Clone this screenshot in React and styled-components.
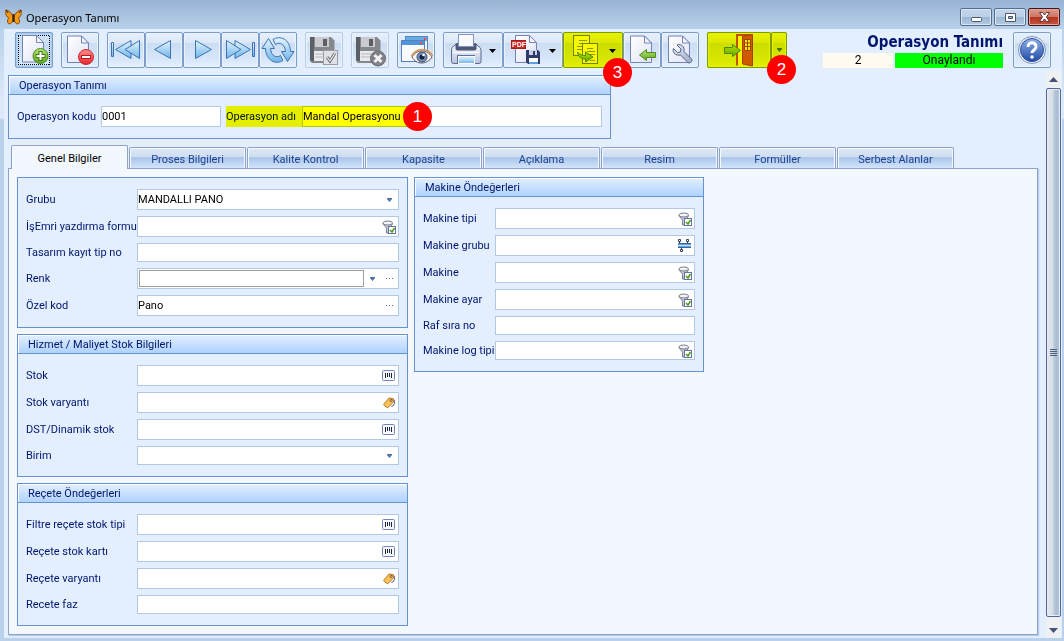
import React, { useState } from 'react';
import styled, { createGlobalStyle, css } from 'styled-components';

const GlobalStyle = createGlobalStyle`
  * {
    box-sizing: border-box;
  }
  body {
    margin: 0;
    background: #b9d1ea;
    font-family: Roboto, 'Noto Sans', sans-serif;
    font-size: 11px;
    color: #00156e;
  }
  button, input, select {
    font: inherit;
  }
`;

const Window = styled.div`
  display: flex;
  flex-direction: column;
  min-height: 100vh;
  padding: 0 2px 3px 4px;
  background: linear-gradient(#98b4d4 0, #b9d1ea 29px, #dce9f7 100px, #dce9f7 118px, #b9d1ea 120px);
`;

const TitleBar = styled.header`
  display: flex;
  align-items: center;
  gap: 4px;
  height: 29px;
  padding: 5px 2px 0 1px;
  color: #000;
`;

const WindowTitle = styled.h1`
  flex: 1;
  margin: 0;
  font-family: 'Noto Sans', 'Open Sans', sans-serif;
  font-size: 11px;
  font-weight: normal;
`;

const WindowButtons = styled.div`
  display: flex;
  gap: 2px;
`;

const WindowButton = styled.button`
  display: flex;
  align-items: center;
  justify-content: center;
  width: 32px;
  height: 18px;
  padding: 0;
  border: 1px solid ${(p) => (p.$danger ? '#43141a' : '#566f8e')};
  border-radius: 2px;
  box-shadow: inset 0 0 0 1px ${(p) => (p.$danger ? '#e0a598' : '#d8e5f3')};
  background: ${(p) =>
    p.$danger
      ? 'linear-gradient(#dc9c90 0, #cf7462 50%, #b23320 50%, #c4553c 100%)'
      : 'linear-gradient(#c3d6ea 0, #bad0e7 50%, #9ab6d3 50%, #b4cce5 100%)'};
`;

const Client = styled.div`
  display: flex;
  flex: 1;
  flex-direction: column;
  background: #e3eeff;
`;

const Toolbar = styled.div`
  display: flex;
  gap: 8px;
  padding: 3px 11px;
`;

const ToolGroup = styled.div`
  position: relative;
  display: flex;
  flex: none;
`;

const ToolButton = styled.button`
  display: flex;
  align-items: center;
  justify-content: center;
  flex: none;
  width: ${(p) => p.$width || 38}px;
  height: 36px;
  padding: 0;
  border: 1px solid #7c9cc9;
  border-radius: 2px;
  box-shadow: inset 0 0 0 1px #e9f2fd;
  background: linear-gradient(#e6f0fc 0, #dce8f8 28%, #cbddf3 29%, #d8e7fa 80%, #e6f1ff 100%);

  svg {
    flex: none;
  }

  &:disabled {
    border-color: #b9cbe3;
  }

  ${(p) =>
    p.$active &&
    css`
      box-shadow: inset 0 0 0 1px #a9cdf0, inset 0 0 0 2px #b8d6f2;
      background: linear-gradient(#d3e6f8, #c3dbf4 40%, #dbeafa);
    `}
`;

// translucent marker pen over the control it belongs to
const Highlight = styled.span`
  position: absolute;
  top: 0;
  left: 0;
  width: ${(p) => p.$width};
  height: 100%;
  background: #ffff00;
  mix-blend-mode: multiply;
  pointer-events: none;
`;

const Badge = styled.span`
  position: absolute;
  top: ${(p) => p.$top}px;
  left: ${(p) => p.$left}px;
  z-index: 2;
  display: flex;
  align-items: center;
  justify-content: center;
  width: 29px;
  height: 29px;
  border-radius: 50%;
  background: #ff0000;
  color: #fff;
  font-family: 'Liberation Sans', Arial, sans-serif;
  font-size: 17px;
  pointer-events: none;
`;

const Status = styled.div`
  display: flex;
  flex-direction: column;
  justify-content: space-between;
  width: 180px;
  margin: 0 2px 0 auto;
`;

const StatusTitle = styled.h2`
  margin: 0;
  font-family: 'DejaVu Sans Condensed', 'DejaVu Sans', sans-serif;
  font-stretch: condensed;
  font-size: 15px;
  line-height: 21px;
  text-align: right;
  white-space: nowrap;
`;

const StatusCells = styled.div`
  display: flex;
  gap: 2px;
`;

const StatusCell = styled.span`
  flex: ${(p) => (p.$wide ? '1' : '0 0 70px')};
  background: ${(p) => (p.$wide ? '#00ff00' : '#fffbf0')};
  color: #000;
  font-size: 12px;
  line-height: 15px;
  text-align: center;
`;

const Body = styled.div`
  display: flex;
  flex: 1;
`;

const Main = styled.main`
  display: flex;
  flex: 1;
  flex-direction: column;
  min-width: 0;
  padding: 4px 8px 3px 4px;
`;

const Group = styled.section`
  align-self: flex-start;
  width: ${(p) => p.$width}px;
  border: 1px solid #6593cf;
  background: #e3eeff;
`;

const GroupTitle = styled.h3`
  height: 19px;
  margin: 0;
  padding-left: 10px;
  border-bottom: 1px solid #6593cf;
  box-shadow: inset 1px 1px 0 #fff;
  background: linear-gradient(#e3efff, #afd2ff);
  font-size: 11px;
  font-weight: normal;
  line-height: 19px;
`;

const Fields = styled.div`
  display: flex;
  flex-direction: column;
  gap: 6px;
  padding: 11px 8px;
`;

const InlineFields = styled.div`
  display: flex;
  gap: 5px;
  padding: 11px 8px;
`;

const Field = styled.div`
  position: relative;
  display: flex;
  align-items: center;
`;

const Label = styled.label`
  flex: none;
  width: ${(p) => p.$width}px;
  line-height: 16px;
  white-space: nowrap;
`;

const Box = styled.div`
  display: flex;
  align-items: center;
  flex: ${(p) => (p.$width ? 'none' : '1')};
  width: ${(p) => (p.$width ? `${p.$width}px` : 'auto')};
  min-width: 0;
  height: ${(p) => (p.$short ? 19 : 21)}px;
  padding-right: 1px;
  border: 1px solid #b3c8e4;
  background: #fff;
`;

const controlStyle = css`
  flex: 1;
  min-width: 0;
  height: 100%;
  padding: 0;
  border: 0;
  outline: none;
  background: transparent;
  color: #000;
`;

const Input = styled.input`
  ${controlStyle}
`;

const Select = styled.select`
  ${controlStyle}
  appearance: none;
`;

const ColorInput = styled.input`
  ${controlStyle}
  height: 17px;
  margin-left: 1px;
  border: 1px solid #a0a0a0;
`;

const BoxButton = styled.button`
  display: flex;
  align-items: center;
  justify-content: center;
  flex: none;
  width: 16px;
  height: 16px;
  padding: 0;
  border: 0;
  background: none;

  & + & {
    margin-left: 1px;
  }
`;

const Tabs = styled.div`
  display: flex;
  align-items: flex-end;
  gap: 1px;
  height: 29px;
  padding-left: 3px;
`;

const Tab = styled.button`
  flex: none;
  width: 117px;
  height: 21px;
  padding: 2px 0 0;
  border: 1px solid #8da3c9;
  border-bottom: 0;
  border-radius: 2px 2px 0 0;
  box-shadow: inset 1px 1px 0 #f5f9ff, inset -1px 0 0 #f5f9ff;
  background: linear-gradient(#dce7f5 0, #cfdef2 45%, #a9c5ea 48%, #d3e4fb 100%);
  color: #1e418f;

  ${(p) =>
    p.$active &&
    css`
      position: relative;
      height: 24px;
      margin-bottom: -1px;
      background: #f3f8ff;
      color: #000;
    `}
`;

const TabPanel = styled.div`
  display: flex;
  flex: 1;
  align-items: flex-start;
  gap: 6px;
  padding: 8px;
  border: 1px solid #8da3c9;
  box-shadow: 1px 1px 1px #b5cbea;
  background: #f3f8ff;
`;

const Column = styled.div`
  display: flex;
  flex-direction: column;
  gap: 6px;
`;

const Scroll = styled.div`
  display: flex;
  flex-direction: column;
  flex: none;
  width: 15px;
  margin-right: 1px;
`;

const ScrollArrow = styled.button`
  display: flex;
  align-items: center;
  justify-content: center;
  height: ${(p) => (p.$down ? 21 : 17)}px;
  padding: ${(p) => (p.$down ? '6px 0 0' : '0')};
  border: 0;
  background: #eff0f2;
`;

const ScrollThumb = styled.div`
  display: flex;
  align-items: center;
  justify-content: center;
  flex: 1;
  border: 1px solid #54659a;
  border-radius: 2px;
  box-shadow: inset 0 0 0 1px #e4eefb;
  background: linear-gradient(90deg, #e4e9ef 0, #d3dbe4 48%, #b9c8da 52%, #a9bad2 85%, #dde7f4 100%);
`;

const GradientDefs = styled.svg`
  position: absolute;
`;

const Gradients = () => (
  <GradientDefs width="0" height="0" aria-hidden="true">
    <defs>
      <linearGradient id="page" x1="0" y1="0" x2="1" y2="1">
        <stop offset="0" stopColor="#fff" />
        <stop offset="1" stopColor="#dfe4f4" />
      </linearGradient>
      <linearGradient id="sky" x1="0" y1="0" x2="0" y2="1">
        <stop offset="0" stopColor="#e4f5ff" />
        <stop offset="1" stopColor="#6fb4e8" />
      </linearGradient>
      <linearGradient id="green" x1="0" y1="0" x2="0" y2="1">
        <stop offset="0" stopColor="#b7e277" />
        <stop offset="1" stopColor="#5fa51e" />
      </linearGradient>
      <linearGradient id="red" x1="0" y1="0" x2="0" y2="1">
        <stop offset="0" stopColor="#ff8d8d" />
        <stop offset="1" stopColor="#e5252d" />
      </linearGradient>
      <linearGradient id="body" x1="0" y1="0" x2="0" y2="1">
        <stop offset="0" stopColor="#fbfcff" />
        <stop offset="1" stopColor="#b7c3df" />
      </linearGradient>
      <linearGradient id="help" x1="0" y1="0" x2="0" y2="1">
        <stop offset="0" stopColor="#8fb1e6" />
        <stop offset="1" stopColor="#1f4ba6" />
      </linearGradient>
      <linearGradient id="steel" x1="0" y1="0" x2="1" y2="1">
        <stop offset="0" stopColor="#e9eef6" />
        <stop offset="1" stopColor="#9aa9c4" />
      </linearGradient>
    </defs>
  </GradientDefs>
);

const Svg = ({ w = 36, h = 34, children }) => (
  <svg width={w} height={h} viewBox={`0 0 ${w} ${h}`} aria-hidden="true">
    {children}
  </svg>
);

const Page = ({ x = 6.5, y = 3, w = 21, h = 26.5, f = 7 }) => (
  <g stroke="#7482b6" strokeLinejoin="round">
    <path d={`M${x} ${y}h${w - f}l${f} ${f}v${h - f}h-${w}z`} fill="url(#page)" />
    <path d={`M${x + w - f} ${y}v${f}h${f}z`} fill="#f3f6ff" />
  </g>
);

const Caret = ({ x = 48.5, y = 16 }) => <path d={`M${x - 3.5} ${y}h7l-3.5 4z`} fill="#000" />;

const NewIcon = () => (
  <Svg>
    <path
      d="M2 2.5h32M2 31.5h32M2.5 3v29M33.5 3v29"
      fill="none"
      stroke="#000"
      strokeDasharray="1 1"
      shapeRendering="crispEdges"
    />
    <Page y={2.5} />
    <circle cx="24.5" cy="23" r="7.5" fill="url(#green)" stroke="#4b8a1c" />
    <path d="M24.5 18v10M19.5 23h10" stroke="#3f7d17" strokeWidth="4" />
    <path d="M24.5 19v8M20.5 23h8" stroke="#fff" strokeWidth="2" />
  </Svg>
);

const DeleteIcon = () => (
  <Svg>
    <Page x={5.5} />
    <circle cx="24" cy="24" r="7.5" fill="url(#red)" stroke="#d1262e" />
    <path d="M19 24h10" stroke="#b81a22" strokeWidth="4" />
    <path d="M20 24h8" stroke="#fff" strokeWidth="2" />
  </Svg>
);

const nav = { fill: 'url(#sky)', stroke: '#3c72b4', strokeLinejoin: 'round' };

const FirstIcon = () => (
  <Svg>
    <g {...nav}>
      <path d="M3.5 9.5h2v14h-2z" />
      <path d="M23 7.5v18l-15.5-9z" />
      <path d="M31.5 7.5v18L17 16.500z" />
    </g>
  </Svg>
);

const PrevIcon = () => (
  <Svg>
    <path d="M24.5 7.5v18l-16-9z" {...nav} />
  </Svg>
);

const NextIcon = () => (
  <Svg>
    <path d="M11.5 7.5v18l16-9z" {...nav} />
  </Svg>
);

const LastIcon = () => (
  <Svg>
    <g {...nav}>
      <path d="M30.5 9.5h2v14h-2z" />
      <path d="M13 7.5v18l15.5-9z" />
      <path d="M4.5 7.5v18l14.5-9z" />
    </g>
  </Svg>
);

const RefreshIcon = () => (
  <Svg>
    <g {...nav}>
      <path d="M13 6.5C20 2 30 6 30.5 18.500h3.500l-6.500 10-6-10h4C25 11 19.500 8.500 15.500 11.500z" />
      <path d="M23 27.500C16 32 6 28 5.500 15.500H2l6.500-10 6 10h-4C11 23 16.500 25.500 20.500 22.500z" />
    </g>
  </Svg>
);

const Floppy = ({ dark = '#5d5f66', mid = '#85878d' }) => (
  <g>
    <path d="M4 4h21l3.500 3.500V30H6l-2-2z" fill={mid} />
    <path d="M4 4h4v24H6l-2-1z" fill={dark} />
    <rect x="9" y="4" width="14" height="10" fill="#c9cbd0" />
    <rect x="17" y="6" width="4" height="7" fill={dark} />
    <rect x="8" y="18" width="17" height="10" fill="#e9eaec" />
    <path d="M9 21h15M9 24h15" stroke="#b5b7bc" />
  </g>
);

const SaveIcon = () => (
  <Svg>
    <Floppy />
    <rect x="17.5" y="17.5" width="14" height="14" fill="#e1e2e5" stroke="#9b9da3" />
    <path d="M21 24l3 4 5-8" fill="none" stroke="#777a80" strokeWidth="3" />
    <path d="M21 24l3 4 5-8" fill="none" stroke="#fff" />
  </Svg>
);

const SaveCancelIcon = () => (
  <Svg>
    <Floppy />
    <circle cx="26" cy="25.5" r="7.5" fill="#808288" stroke="#696b70" />
    <path d="M22.5 22l7 7M29.5 22l-7 7" stroke="#f4f4f5" strokeWidth="3" />
  </Svg>
);

const PreviewIcon = () => (
  <Svg>
    <rect x="7.5" y="3.5" width="22" height="20" fill="#f0f6ff" stroke="#5687c2" />
    <path d="M8 4h21v4H8z" fill="#69a9e4" />
    <rect x="26" y="5" width="2" height="2" fill="#ef4a3a" />
    <rect x="3.5" y="7.5" width="23" height="21" fill="#f7faff" stroke="#5680bd" />
    <path d="M4 8h22v4H4z" fill="#4f94d8" />
    <rect x="22" y="9" width="2" height="2" fill="#ef4a3a" />
    <path d="M14 24c5-8 15-8 20 0-5 8-16 8-20 0z" fill="#f5f3f1" stroke="#5b5663" />
    <path d="M13.500 23.500c4.500-9 16.500-9 21-.5" fill="none" stroke="#d39a66" strokeWidth="2" />
    <circle cx="24" cy="24" r="5" fill="#7590b8" stroke="#3d4f78" />
    <circle cx="24" cy="24" r="2.5" fill="#17203b" />
    <circle cx="25.5" cy="22" r="1.3" fill="#fff" />
  </Svg>
);

const PrintIcon = () => (
  <Svg w={58}>
    <path d="M8 14.5l5-4h18l5 4 1 2v12q0 2-2 2H9.500q-2 0-2-2v-12z" fill="url(#body)" stroke="#5d6b93" />
    <path d="M11.500 10.500h21v5q0 2-2 2h-17q-2 0-2-2z" fill="#4c5976" />
    <rect x="14.5" y="1.5" width="15" height="12" fill="#f7f9ff" stroke="#8592bb" />
    <path d="M9 19.5h26" stroke="#fff" />
    <path d="M13 22h18v9H13z" fill="#5f6f97" />
    <rect x="14.5" y="23.5" width="16" height="7" fill="url(#sky)" stroke="#f7f9ff" />
    <Caret />
  </Svg>
);

const PdfIcon = () => (
  <Svg w={58}>
    <Page x={11.5} y={2.5} w={21} h={27} />
    <rect x="7.5" y="7.5" width="14" height="8" fill="#cf2727" stroke="#a81c1c" />
    <text x="8" y="14" fill="#fff" fontFamily="Liberation Sans, sans-serif" fontSize="7" fontWeight="bold">
      PDF
    </text>
    <path d="M22 17h12l2 2v12H24l-2-2z" fill="#323c66" />
    <rect x="25" y="17" width="8" height="5" fill="#c9d2e8" />
    <rect x="29" y="18" width="2" height="4" fill="#323c66" />
    <rect x="25" y="25" width="9" height="6" fill="#fff" />
    <path d="M25 29h9v2h-9z" fill="#5aa3e0" />
    <Caret />
  </Svg>
);

const CopyIcon = () => (
  <Svg w={58}>
    <rect x="9.5" y="2.5" width="16" height="20" fill="#f6f8ff" stroke="#7482a6" />
    <path d="M15 7.5h8M15 10.5h8M13 13.5h10M13 16.5h10" stroke="#8f9ab5" />
    <rect x="18.5" y="10.5" width="15" height="20" fill="#f6f8ff" stroke="#7482a6" />
    <path d="M23 15.5h6M23 18.5h8M22 21.5h9M26 27.5h5" stroke="#8f9ab5" />
    <path
      d="M13.500 19c2 3 5 3.500 8 3.500V19l7.500 5-7.500 5v-3c-5 0-7.500-3-8-7z"
      fill="url(#green)"
      stroke="#4b8a1c"
    />
    <Caret />
  </Svg>
);

const ImportIcon = () => (
  <Svg>
    <Page />
    <path d="M15.5 22l7-5.500v3h9v5h-9v3z" fill="url(#green)" stroke="#4b8a1c" />
  </Svg>
);

const SettingsIcon = () => (
  <Svg>
    <Page />
    <path
      d="M11.500 15.500l4 4 3-.5.500-3-4-4c4-1.500 8 1.500 7 6.500l7.500 7.500c1.500 2-1.500 5-3.500 3.500L18.500 22c-5 1-8.500-2.500-7-6.500z"
      fill="url(#steel)"
      stroke="#53648b"
    />
  </Svg>
);

const ExitIcon = () => (
  <Svg w={62}>
    <path d="M29 32.5V2h14v30" fill="#f2f4fb" stroke="#c25223" strokeWidth="2" />
    <path d="M34.500 3.500l10-2V33l-10-2z" fill="#cf5a2a" stroke="#a6401a" />
    <path d="M36.500 6.500h6v11h-6z" fill="#e9edf8" stroke="#a6401a" />
    <path d="M39.500 6v11M36.500 10h6M36.500 13.500h6" stroke="#a6401a" />
    <path d="M16.500 14.500h8v-3l8 6-8 6v-3h-8z" fill="url(#green)" stroke="#4b8a1c" />
  </Svg>
);

const HelpIcon = () => (
  <Svg>
    <circle cx="18" cy="17" r="13.5" fill="#f4f7fd" stroke="#7e8fb8" />
    <circle cx="18" cy="17" r="11.5" fill="url(#help)" stroke="#2b4f9c" />
    <path d="M14 14c0-6 8.500-5.500 8 0 0 3-4 3-4 6" fill="none" stroke="#fff" strokeWidth="3" />
    <circle cx="18" cy="24" r="1.8" fill="#fff" />
  </Svg>
);

const ButterflyIcon = () => (
  <Svg w={17} h={16}>
    <path d="M8 8C7 4 3 1 1 1c-1 3 0 7 3 8-2 1-2 5 0 6 2 0 4-2 4-5z" fill="#f39a14" stroke="#8a4a0c" />
    <path d="M9 8c1-4 5-7 7-7 1 3 0 7-3 8 2 1 2 5 0 6-2 0-4-2-4-5z" fill="#f39a14" stroke="#8a4a0c" />
    <path d="M8.5 5v8" stroke="#3c2108" strokeWidth="2" />
    <path d="M1 1l2 3M16 1l-2 3" stroke="#3c2108" />
  </Svg>
);

const DropIcon = () => (
  <Svg w={7} h={4}>
    <path d="M1 0h5v1H1zM1 1h5L3.500 4z" fill="#4a72ad" />
  </Svg>
);

const DotsIcon = () => (
  <Svg w={8} h={2}>
    <path d="M1 0h1v1H1zM4 0h1v1H4zM7 0h1v1H7z" fill="#4a6ea8" />
  </Svg>
);

const FilterIcon = () => (
  <Svg w={14} h={14}>
    <path d="M1 3.500c0 2 3.500 3 3.500 5V13h3V8.500c0-2 3-3 3-5z" fill="#c3c8d2" stroke="#777e8e" />
    <ellipse cx="5.700" cy="3" rx="4.800" ry="2" fill="#f2f3f6" stroke="#777e8e" />
    <rect x="6.5" y="6.5" width="7" height="7" fill="#fff" stroke="#6572a6" />
    <path d="M8 10l2 2 2.500-4" fill="none" stroke="#4b9a16" strokeWidth="1.5" />
  </Svg>
);

const BarcodeIcon = () => (
  <Svg w={14} h={12}>
    <rect x=".5" y=".5" width="12" height="10" rx="1" fill="#f5f8ff" stroke="#7484b8" />
    <path d="M3.500 3v5M5.500 3v4M7.500 3v4M9.500 3v5" stroke="#1c2440" />
  </Svg>
);

const TagIcon = () => (
  <Svg w={12} h={12}>
    <path d="M8 2.500c3-2 5 2 2.500 6l-2 1" fill="none" stroke="#555b6b" />
    <path d="M.500 7.500L6 1l4 .500.500 3.500-6 6z" fill="#fcc35a" stroke="#b77328" />
    <circle cx="8" cy="3.500" r="1" fill="#fff" stroke="#7a4b18" />
  </Svg>
);

const MachineIcon = () => (
  <Svg w={14} h={14}>
    <path d="M1.500 3v3M9.500 3v3M3.500 9v3" stroke="#3a3f50" />
    <path d="M.500.500h2v2h-2zM8.500.500h2v2h-2zM2.500 10.500h2v2h-2z" fill="#fff" stroke="#3a3f50" />
    <path d="M0 4h13v5H0z" fill="#6aa7dd" />
    <path d="M0 4.500h13M0 8.500h13" stroke="#33649f" />
    <path d="M0 6.500h13" stroke="#b9dcf7" />
  </Svg>
);

const icons = {
  drop: DropIcon,
  dots: DotsIcon,
  filter: FilterIcon,
  barcode: BarcodeIcon,
  tag: TagIcon,
  machine: MachineIcon,
};

const toolGroups = [
  [{ name: 'Yeni', Icon: NewIcon, active: true }],
  [{ name: 'Sil', Icon: DeleteIcon }],
  [
    { name: 'İlk kayıt', Icon: FirstIcon },
    { name: 'Önceki kayıt', Icon: PrevIcon },
    { name: 'Sonraki kayıt', Icon: NextIcon },
    { name: 'Son kayıt', Icon: LastIcon },
    { name: 'Yenile', Icon: RefreshIcon },
  ],
  [{ name: 'Kaydet', Icon: SaveIcon, disabled: true }],
  [{ name: 'Vazgeç', Icon: SaveCancelIcon, disabled: true }],
  [{ name: 'Ön izleme', Icon: PreviewIcon }],
  [
    { name: 'Yazdır', Icon: PrintIcon, width: 60 },
    { name: 'PDF kaydet', Icon: PdfIcon, width: 60 },
    { name: 'Kopyala', Icon: CopyIcon, width: 60, badge: 3 },
    { name: 'İçe aktar', Icon: ImportIcon },
    { name: 'Ayarlar', Icon: SettingsIcon },
  ],
];

const tabs = [
  'Genel Bilgiler',
  'Proses Bilgileri',
  'Kalite Kontrol',
  'Kapasite',
  'Açıklama',
  'Resim',
  'Formüller',
  'Serbest Alanlar',
];

const generalFields = [
  { id: 'grubu', label: 'Grubu', options: ['MANDALLI PANO'], buttons: ['drop'] },
  { id: 'yazdirmaFormu', label: 'İşEmri yazdırma formu', buttons: ['filter'] },
  { id: 'tasarimTip', label: 'Tasarım kayıt tip no', short: true },
  { id: 'renk', label: 'Renk', color: true, buttons: ['drop', 'dots'] },
  { id: 'ozelKod', label: 'Özel kod', buttons: ['dots'] },
];

const stockFields = [
  { id: 'stok', label: 'Stok', buttons: ['barcode'] },
  { id: 'stokVaryanti', label: 'Stok varyantı', buttons: ['tag'] },
  { id: 'dinamikStok', label: 'DST/Dinamik stok', buttons: ['barcode'] },
  { id: 'birim', label: 'Birim', options: [''], buttons: ['drop'], short: true },
];

const recipeFields = [
  { id: 'filtreRecete', label: 'Filtre reçete stok tipi', buttons: ['barcode'] },
  { id: 'receteStok', label: 'Reçete stok kartı', buttons: ['barcode'] },
  { id: 'receteVaryanti', label: 'Reçete varyantı', buttons: ['tag'] },
  { id: 'receteFaz', label: 'Recete faz', short: true },
];

const machineFields = [
  { id: 'makineTipi', label: 'Makine tipi', buttons: ['filter'] },
  { id: 'makineGrubu', label: 'Makine grubu', buttons: ['machine'] },
  { id: 'makine', label: 'Makine', buttons: ['filter'] },
  { id: 'makineAyar', label: 'Makine ayar', buttons: ['filter'] },
  { id: 'rafSira', label: 'Raf sıra no', short: true },
  { id: 'makineLog', label: 'Makine log tipi', buttons: ['filter'], short: true },
];

const FieldGroup = ({ title, width, labelWidth, fields, values, onChange }) => (
  <Group $width={width}>
    {title && <GroupTitle>{title}</GroupTitle>}
    <Fields>
      {fields.map(({ id, label, options, color, short, buttons = [] }) => {
        const Control = color ? ColorInput : Input;
        return (
          <Field key={id}>
            <Label htmlFor={id} $width={labelWidth}>
              {label}
            </Label>
            <Box $short={short}>
              {options ? (
                <Select id={id} name={id} value={values[id] || ''} onChange={onChange}>
                  {options.map((option) => (
                    <option key={option}>{option}</option>
                  ))}
                </Select>
              ) : (
                <Control type="text" id={id} name={id} value={values[id] || ''} onChange={onChange} />
              )}
              {buttons.map((name) => {
                const Icon = icons[name];
                return (
                  <BoxButton key={name} type="button" aria-label={`${label} seç`}>
                    <Icon />
                  </BoxButton>
                );
              })}
            </Box>
          </Field>
        );
      })}
    </Fields>
  </Group>
);

const App = () => {
  const [activeTab, setActiveTab] = useState(tabs[0]);
  const [values, setValues] = useState({
    kod: '0001',
    ad: 'Mandal Operasyonu',
    grubu: 'MANDALLI PANO',
    ozelKod: 'Pano',
  });

  const handleChange = (e) => {
    const { name, value } = e.target;
    setValues((prev) => ({ ...prev, [name]: value }));
  };

  return (
    <Window>
      <GlobalStyle />
      <Gradients />
      <TitleBar>
        <ButterflyIcon />
        <WindowTitle>Operasyon Tanımı</WindowTitle>
        <WindowButtons>
          <WindowButton aria-label="Simge durumuna küçült">
            <Svg w={13} h={12}>
              <rect x="1.5" y="6.5" width="10" height="4" rx="1" fill="#fff" stroke="#4c5668" />
            </Svg>
          </WindowButton>
          <WindowButton aria-label="Ekranı kapla">
            <Svg w={13} h={12}>
              <path d="M1.500 2.500h10v8h-10zM4.500 5.500v2h4v-2z" fill="#fff" fillRule="evenodd" stroke="#4c5668" />
            </Svg>
          </WindowButton>
          <WindowButton $danger aria-label="Kapat">
            <Svg w={13} h={12}>
              <path
                d="M1.500 1.500h3l2 2.500 2-2.500h3L8.500 6l3 4.500h-3l-2-2.500-2 2.500h-3l3-4.500z"
                fill="#fff"
                stroke="#5d3338"
              />
            </Svg>
          </WindowButton>
        </WindowButtons>
      </TitleBar>

      <Client>
        <Toolbar>
          {toolGroups.map((group) => (
            <ToolGroup key={group[0].name}>
              {group.map(({ name, Icon, width, active, disabled, badge }) => {
                const button = (
                  <ToolButton key={name} aria-label={name} $width={width} $active={active} disabled={disabled}>
                    <Icon />
                  </ToolButton>
                );
                return badge ? (
                  <ToolGroup key={name}>
                    {button}
                    <Highlight $width="100%" />
                    <Badge $top={26} $left={40}>
                      {badge}
                    </Badge>
                  </ToolGroup>
                ) : (
                  button
                );
              })}
            </ToolGroup>
          ))}
          <ToolGroup>
            <ToolButton aria-label="Çıkış" $width={64}>
              <ExitIcon />
            </ToolButton>
            <ToolButton aria-label="Çıkış seçenekleri" $width={16}>
              <DropIcon />
            </ToolButton>
            <Highlight $width="100%" />
            <Badge $top={23} $left={60}>
              2
            </Badge>
          </ToolGroup>
          <Status>
            <StatusTitle>Operasyon Tanımı</StatusTitle>
            <StatusCells>
              <StatusCell>2</StatusCell>
              <StatusCell $wide>Onaylandı</StatusCell>
            </StatusCells>
          </Status>
          <ToolButton aria-label="Yardım">
            <HelpIcon />
          </ToolButton>
        </Toolbar>

        <Body>
          <Main>
            <Group $width={603}>
              <GroupTitle>Operasyon Tanımı</GroupTitle>
              <InlineFields>
                <Field>
                  <Label htmlFor="kod" $width={84}>
                    Operasyon kodu
                  </Label>
                  <Box $width={120}>
                    <Input type="text" id="kod" name="kod" value={values.kod} onChange={handleChange} />
                  </Box>
                </Field>
                <Field>
                  <Label htmlFor="ad" $width={76}>
                    Operasyon adı
                  </Label>
                  <Box $width={300}>
                    <Input type="text" id="ad" name="ad" value={values.ad} onChange={handleChange} />
                  </Box>
                  <Highlight $width="185px" />
                  <Badge $top={-4} $left={177}>
                    1
                  </Badge>
                </Field>
              </InlineFields>
            </Group>

            <Tabs role="tablist">
              {tabs.map((tab) => (
                <Tab
                  key={tab}
                  role="tab"
                  aria-selected={tab === activeTab}
                  $active={tab === activeTab}
                  onClick={() => setActiveTab(tab)}
                >
                  {tab}
                </Tab>
              ))}
            </Tabs>

            <TabPanel role="tabpanel">
              <Column>
                <FieldGroup width={391} labelWidth={111} fields={generalFields} values={values} onChange={handleChange} />
                <FieldGroup
                  title="Hizmet / Maliyet Stok Bilgileri"
                  width={391}
                  labelWidth={111}
                  fields={stockFields}
                  values={values}
                  onChange={handleChange}
                />
                <FieldGroup
                  title="Reçete Öndeğerleri"
                  width={391}
                  labelWidth={111}
                  fields={recipeFields}
                  values={values}
                  onChange={handleChange}
                />
              </Column>
              <FieldGroup
                title="Makine Öndeğerleri"
                width={290}
                labelWidth={72}
                fields={machineFields}
                values={values}
                onChange={handleChange}
              />
            </TabPanel>
          </Main>

          <Scroll>
            <ScrollArrow aria-label="Yukarı kaydır">
              <Svg w={9} h={5}>
                <path d="M0 5L4.500 0 9 5z" fill="#46517a" />
              </Svg>
            </ScrollArrow>
            <ScrollThumb>
              <Svg w={7} h={8}>
                <path d="M0 .5h7M0 2.500h7M0 4.500h7M0 6.500h7" stroke="#4d5d80" />
              </Svg>
            </ScrollThumb>
            <ScrollArrow $down aria-label="Aşağı kaydır">
              <Svg w={9} h={5}>
                <path d="M0 0h9L4.500 5z" fill="#46517a" />
              </Svg>
            </ScrollArrow>
          </Scroll>
        </Body>
      </Client>
    </Window>
  );
};

export default App;
